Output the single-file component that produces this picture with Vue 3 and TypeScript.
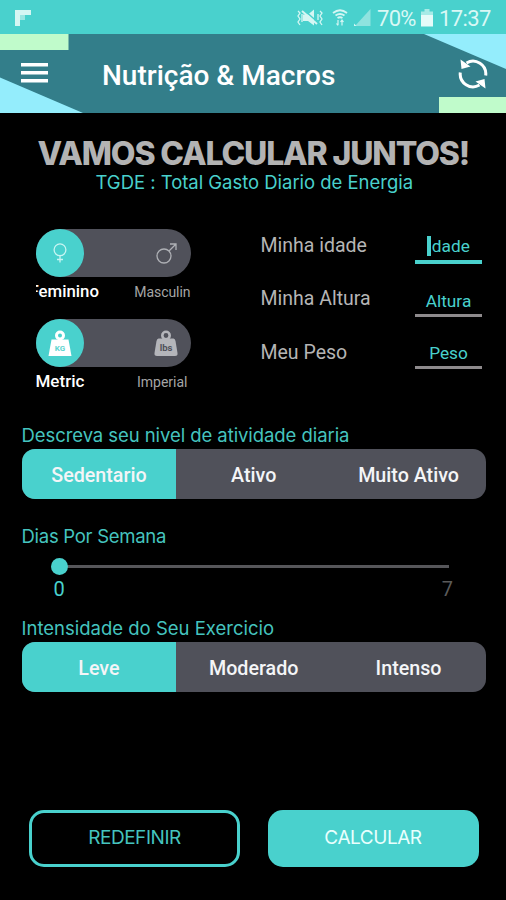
<script setup lang="ts">
import { ref } from 'vue'

interface Segment {
  id: string
  label: string
}

const activityLevels: Segment[] = [
  { id: 'sedentary', label: 'Sedentario' },
  { id: 'active', label: 'Ativo' },
  { id: 'very-active', label: 'Muito Ativo' },
]
const intensities: Segment[] = [
  { id: 'light', label: 'Leve' },
  { id: 'moderate', label: 'Moderado' },
  { id: 'intense', label: 'Intenso' },
]

const activity = ref('sedentary')
const intensity = ref('light')
const days = ref(0)
</script>

<template>
  <div class="screen">
    <div class="status">
      <svg class="flip" width="16" height="16" viewBox="0 0 16 16">
        <path d="M0 0H16V5H10V10H5V16H0Z" fill="#d5f6f3" />
        <path d="M5 5H10V10H5Z" fill="#9be6e2" />
      </svg>
      <svg class="mute" width="28" height="18" viewBox="0 0 28 18" fill="none" stroke="#d5f6f3" stroke-width="1.6">
        <path d="M7 5.500h5l6-5v16l-6-4.500H7z" fill="#d5f6f3" stroke="none" />
        <path d="M8 1l14 12.500" stroke="#49d1cd" stroke-width="1.600" />
        <path d="M6 2l15 13" stroke-width="2" />
        <path d="M2 2l2 2-2 3 2 3-2 3 2 3M6 5v8M24 2l2 2-2 3 2 3-2 3 2 3M22 5v6" stroke-width="1.3" />
      </svg>
      <svg class="wifi" width="16" height="18" viewBox="0 0 16 18" fill="none" stroke="#d5f6f3" stroke-width="1.8">
        <path d="M1 4Q8-1.500 15 4M3.500 6.500Q8 3.500 12.500 6.500M5.500 9Q8 7.500 10.500 9" />
        <path d="M6 11v5M4.500 14.500L6 16.500M10 16.500v-5M8.500 13L10 11l1.500 2" stroke-width="1.2" />
      </svg>
      <svg class="signal" width="17" height="18" viewBox="0 0 17 18">
        <path d="M16.500 0V17H1Z" fill="#8fe3df" />
        <path d="M0 17v-2.500L2.500 17z" fill="#d5f6f3" />
      </svg>
      <span class="percent">70%</span>
      <svg class="battery" width="12" height="18" viewBox="0 0 12 18">
        <path d="M3.500 0h5v2.500H12V8H0V2.500h3.500z" fill="#a8ebe7" />
        <path d="M0 6H12V17.500H0Z" fill="#e6fbf9" />
      </svg>
      <span class="clock">17:37</span>
    </div>

    <header class="bar">
      <svg class="shapes" width="506" height="79" viewBox="0 0 506 79">
        <path d="M0 0H68.500V16H0ZM439 63H506V79H439Z" fill="#c0fbcb" />
        <path d="M0 43.500L83 79H0ZM424 0H506V35Z" fill="#94edfc" />
      </svg>
      <svg class="menu" width="27" height="20" viewBox="0 0 27 20">
        <path d="M0 0H27V3.500H0ZM0 8H27V11.500H0ZM0 16H27V19.500H0Z" fill="#fff" />
      </svg>
      <h1>Nutrição &amp; Macros</h1>
      <svg class="refresh" width="32" height="32" viewBox="0 0 32 32" fill="none" stroke="#fff" stroke-width="3">
        <path d="M9.500 5A12.800 12.800 0 0 1 28.700 17.500" />
        <path d="M22.500 27A12.800 12.800 0 0 1 3.300 14.500" />
        <path d="M3.500 1.500L4.500 11L13.500 8.500ZM28.500 30.500L27.500 21L18.500 23.500Z" fill="#fff" stroke="none" />
      </svg>
    </header>

    <main>
      <h2>VAMOS CALCULAR JUNTOS!</h2>
      <p class="subtitle">TGDE : Total Gasto Diario de Energia</p>

      <div class="profile">
        <div class="toggles">
          <div class="toggle">
            <span class="knob">
              <svg width="16" height="20" viewBox="0 0 16 20" fill="none" stroke="#c8f5f2" stroke-width="1.3">
                <circle cx="8" cy="6.800" r="5.900" />
                <path d="M8 12.700V19.500M5 16.500H11" />
              </svg>
            </span>
            <svg class="other" width="22" height="22" viewBox="0 0 22 22" fill="none" stroke="#aeb0b5" stroke-width="1.3">
              <circle cx="8" cy="14" r="7" />
              <path d="M13 9L20 2M14 2H20V8" />
            </svg>
          </div>
          <div class="captions">
            <span class="on feminine"><i>Feminino</i></span>
            <span class="off masculine">Masculin</span>
          </div>
          <div class="toggle">
            <span class="knob">
              <svg class="weight" width="24" height="27" viewBox="0 0 24 27">
                <path d="M3.500 9.500H20.500L23.500 26H.5Z" fill="#fff" />
                <circle cx="12" cy="5.500" r="3.500" fill="none" stroke="#fff" stroke-width="3" />
                <text x="12" y="20.500" text-anchor="middle" fill="#5cd5d0">KG</text>
              </svg>
            </span>
            <svg class="other weight" width="24" height="27" viewBox="0 0 24 27">
              <path d="M4.500 8.500H19.500Q21 8.500 21.500 11L23.500 23Q24 26 21 26H3Q0 26 .5 23L2.500 11Q3 8.500 4.500 8.500Z" fill="#b4b5ba" />
              <circle cx="12" cy="5.500" r="3.700" fill="#50515a" stroke="#b4b5ba" stroke-width="2.600" />
              <text class="lbs-text" x="12" y="21" text-anchor="middle" fill="#50515a">lbs</text>
            </svg>
          </div>
          <div class="captions">
            <span class="on metric">Metric</span>
            <span class="off imperial">Imperial</span>
          </div>
        </div>

        <div class="fields">
          <div class="field age">
            <label>Minha idade</label>
            <div class="input focused"><span>Idade</span></div>
          </div>
          <div class="field height">
            <label>Minha Altura</label>
            <div class="input"><span>Altura</span></div>
          </div>
          <div class="field mass">
            <label>Meu Peso</label>
            <div class="input"><span>Peso</span></div>
          </div>
        </div>
      </div>

      <h3 class="q-activity">Descreva seu nivel de atividade diaria</h3>
      <div class="segments">
        <button
          v-for="s in activityLevels"
          :key="s.id"
          :class="{ selected: s.id === activity }"
          @click="activity = s.id"
        >{{ s.label }}</button>
      </div>

      <h3 class="q-days">Dias Por Semana</h3>
      <div class="slider">
        <div class="track"><span class="thumb"></span></div>
        <div class="ends"><span class="value">{{ days }}</span><span>7</span></div>
      </div>

      <h3 class="q-intensity">Intensidade do Seu Exercicio</h3>
      <div class="segments">
        <button
          v-for="s in intensities"
          :key="s.id"
          :class="{ selected: s.id === intensity }"
          @click="intensity = s.id"
        >{{ s.label }}</button>
      </div>

      <div class="actions">
        <button class="reset">REDEFINIR</button>
        <button class="calculate">CALCULAR</button>
      </div>
    </main>
  </div>
</template>

<style>
body {
  background: #000;
}
</style>

<style scoped>
.screen {
  width: 506px;
  height: 900px;
  overflow: hidden;
  background: #000;
  font-family: Roboto, sans-serif;
  color: #fff;
}
.screen * {
  box-sizing: border-box;
}
h1, h2, h3, p {
  margin: 0;
  white-space: nowrap;
}
button {
  border: 0;
  padding: 0;
  font-family: inherit;
}
svg {
  display: block;
  flex: none;
}

.status {
  display: flex;
  align-items: center;
  height: 34px;
  padding: 2px 0 0 15px;
  background: #49d1cd;
  color: #d9f8f5;
  font-size: 22px;
}
.flip {
  margin-right: auto;
}
.wifi {
  margin-left: 8px;
}
.signal {
  margin-left: 6px;
}
.percent {
  width: 41px;
  margin-left: 6px;
  letter-spacing: -0.7px;
}
.battery {
  margin-left: 3px;
}
.clock {
  width: 53px;
  margin: 0 14px 0 6px;
  letter-spacing: -0.6px;
}

.bar {
  position: relative;
  display: flex;
  align-items: center;
  height: 79px;
  padding: 0 17px 0 21px;
  background: #337e8a;
}
.shapes {
  position: absolute;
  inset: 0;
}
.menu, h1, .refresh {
  position: relative;
}
.menu {
  margin-top: -1px;
}
h1 {
  margin: 4px auto 0 54px;
  font-size: 28px;
  font-weight: 500;
  line-height: 34px;
}

main {
  padding: 21px 20px 0 21.5px;
}
h2 {
  margin-left: 16px;
  font: 800 32px/40px Inter, sans-serif;
  letter-spacing: -1.15px;
  color: #b3b3b3;
}
.subtitle {
  margin: -4px 0 0 74px;
  font: 400 18.500px/24px Inter, sans-serif;
  letter-spacing: -0.03px;
  color: #49d1cd;
}

.profile {
  display: flex;
  height: 190px;
  margin-top: 35px;
}
.toggles {
  width: 155px;
  margin-left: 14px;
}
.toggle {
  display: flex;
  align-items: center;
  justify-content: space-between;
  height: 48px;
  padding-right: 13px;
  border-radius: 24px;
  background: #50515a;
}
.knob {
  display: flex;
  align-items: center;
  justify-content: center;
  width: 48px;
  height: 48px;
  border-radius: 50%;
  background: #49d1cd;
}
.weight text {
  font: 700 8px Roboto, sans-serif;
}
.weight .lbs-text {
  font-size: 9.500px;
}
.captions {
  display: flex;
  justify-content: space-between;
  height: 42px;
  padding-top: 2px;
  line-height: 24px;
}
.on {
  font-size: 16.800px;
  font-weight: 500;
}
.off {
  padding-top: 1px;
  font-size: 14px;
  color: #a5a5a5;
}
.masculine {
  letter-spacing: -0.05px;
}
.feminine {
  width: 64px;
  overflow: hidden;
}
.feminine i {
  display: block;
  margin-left: -6px;
  font-style: normal;
}
.metric {
  font-size: 17px;
}
.imperial {
  margin-right: 3px;
}

.fields {
  width: 221.500px;
  margin-left: 70px;
}
.field {
  display: flex;
  justify-content: space-between;
}
.field label {
  padding-top: 1px;
  font-size: 19.500px;
  line-height: 24px;
  color: #b5b5b5;
}
.input {
  display: flex;
  justify-content: center;
  width: 67px;
  height: 31px;
  padding-top: 3px;
  border-bottom: 3px solid #8e8a8c;
  font-size: 17.300px;
  line-height: 24px;
  color: #49d1cd;
}
.input.focused {
  padding-top: 1px;
  border-bottom: 4px solid #49d1cd;
}
.focused span {
  position: relative;
}
.focused span::before {
  content: '';
  position: absolute;
  left: 0;
  top: 2px;
  width: 4px;
  height: 20px;
  background: #49d1cd;
}
.age {
  padding-top: 4px;
}
.height {
  margin-top: 22px;
}
.mass {
  margin-top: 21px;
}
.mass label {
  padding-top: 3px;
}

h3 {
  font: 400 18.500px/24px Inter, sans-serif;
  letter-spacing: -0.07px;
  color: #45c4bf;
}
.q-activity {
  margin-top: 4px;
}
.segments {
  display: grid;
  grid-template-columns: repeat(3, 1fr);
  height: 49.500px;
  margin-top: 2px;
  overflow: hidden;
  border-radius: 13px;
  background: #50515a;
}
.segments button {
  background: transparent;
  color: #f4f5f7;
  font-size: 19.700px;
  font-weight: 500;
  padding-top: 3px;
}
.segments .selected {
  background: #49d1cd;
}
.q-days {
  margin-top: 25.500px;
  letter-spacing: -0.28px;
}
.q-intensity {
  letter-spacing: 0;
}
.slider {
  height: 68px;
  padding: 17px 37px 0 38px;
}
.track {
  display: flex;
  align-items: center;
  height: 3px;
  background: #56565a;
}
.thumb {
  flex: none;
  width: 17.500px;
  height: 17.500px;
  margin-left: -9px;
  border-radius: 50%;
  background: #49d1cd;
}
.ends {
  display: flex;
  justify-content: space-between;
  margin: 9px -4px 0 -6px;
  font-size: 20px;
  line-height: 24px;
  color: #5a5a5a;
}
.value {
  color: #49d1cd;
}

.actions {
  display: flex;
  justify-content: space-between;
  margin: 118.500px 7.500px 0;
}
.actions button {
  width: 211px;
  height: 57px;
  border-radius: 15px;
  font: 400 19px/24px Inter, sans-serif;
  letter-spacing: -0.45px;
  padding-bottom: 2px;
}
.actions .reset {
  border: 3px solid #49d1cd;
  background: transparent;
  color: #45c4bf;
}
.actions .calculate {
  background: #49d1cd;
  color: #e8fffd;
}
</style>
